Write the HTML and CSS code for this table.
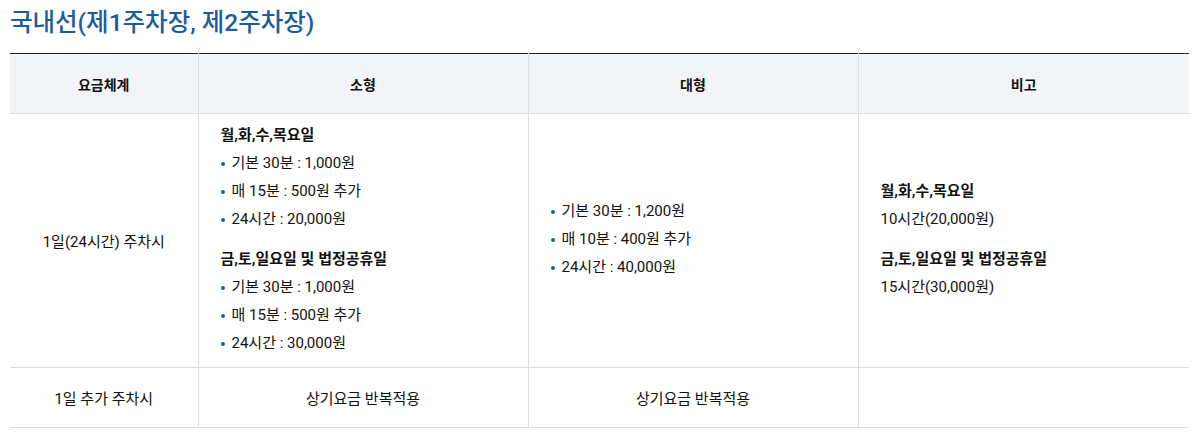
FILE: index.html
```html
<!DOCTYPE html>
<html lang="ko">
<head>
<meta charset="utf-8">
<link rel="stylesheet" href="styles.css">
</head>
<body>
<div class="page">
  <h2 class="title">국내선(제1주차장, 제2주차장)</h2>
  <table class="fee">
    <colgroup>
      <col class="c1"><col class="c2"><col class="c3"><col class="c4">
    </colgroup>
    <thead>
      <tr>
        <th>요금체계</th>
        <th>소형</th>
        <th>대형</th>
        <th>비고</th>
      </tr>
    </thead>
    <tbody>
      <tr class="main">
        <td class="center">1일(24시간) 주차시</td>
        <td class="left">
          <div class="group">
            <p class="sub">월,화,수,목요일</p>
            <ul class="dots">
              <li>기본 30분 : 1,000원</li>
              <li>매 15분 : 500원 추가</li>
              <li>24시간 : 20,000원</li>
            </ul>
          </div>
          <div class="group">
            <p class="sub">금,토,일요일 및 법정공휴일</p>
            <ul class="dots">
              <li>기본 30분 : 1,000원</li>
              <li>매 15분 : 500원 추가</li>
              <li>24시간 : 30,000원</li>
            </ul>
          </div>
        </td>
        <td class="left">
          <ul class="dots">
            <li>기본 30분 : 1,200원</li>
            <li>매 10분 : 400원 추가</li>
            <li>24시간 : 40,000원</li>
          </ul>
        </td>
        <td class="left">
          <div class="group">
            <p class="sub">월,화,수,목요일</p>
            <p class="txt">10시간(20,000원)</p>
          </div>
          <div class="group">
            <p class="sub">금,토,일요일 및 법정공휴일</p>
            <p class="txt">15시간(30,000원)</p>
          </div>
        </td>
      </tr>
      <tr class="extra">
        <td class="center">1일 추가 주차시</td>
        <td class="center">상기요금 반복적용</td>
        <td class="center">상기요금 반복적용</td>
        <td></td>
      </tr>
    </tbody>
  </table>
</div>
</body>
</html>
```

FILE: styles.css
```css
* { box-sizing: border-box; }
html, body { margin: 0; padding: 0; background: #fff; }
body {
  font-family: "Roboto", "Noto Sans CJK KR", sans-serif;
  color: #111;
  font-size: 15px;
}
.page { padding: 0 6px 0 10px; }
.title {
  margin: 0;
  padding-top: 7px;
  height: 53px;
  font-size: 24.5px;
  line-height: 32px;
  font-weight: 500;
  color: #1d5c9c;
  letter-spacing: 0;
}
.fee {
  width: 1179px;
  border-collapse: collapse;
  table-layout: fixed;
  border-top: 1px solid #222;
}
.c1 { width: 188px; }
.c2 { width: 330px; }
.c3 { width: 330px; }
.c4 { width: 331px; }
.fee th, .fee td {
  border-left: 1px solid #dcdde0;
  border-bottom: 1px solid #dcdde0;
}
.fee th:first-child, .fee td:first-child { border-left: none; }
.fee th {
  background: #f3f4f8;
  height: 60px;
  font-size: 14px;
  font-weight: 700;
  text-align: center;
  vertical-align: middle;
  padding: 0;
}
.fee td { vertical-align: middle; padding: 0; }
.main td { height: 253px; }
.extra td { height: 60px; }
.center { text-align: center; }
.left { padding: 7px 22px 10px 22px !important; }
.group + .group { margin-top: 12px; }
.sub {
  margin: 0;
  line-height: 28px;
  font-weight: 700;
}
.txt { margin: 0; line-height: 28px; }
.dots { margin: 0; padding: 0; list-style: none; }
.dots li {
  position: relative;
  padding-left: 11px;
  line-height: 28px;
}
.dots li::before {
  content: "";
  position: absolute;
  left: 0;
  top: 13px;
  width: 4px;
  height: 4px;
  border-radius: 50%;
  background: #1d5c9c;
}
```
